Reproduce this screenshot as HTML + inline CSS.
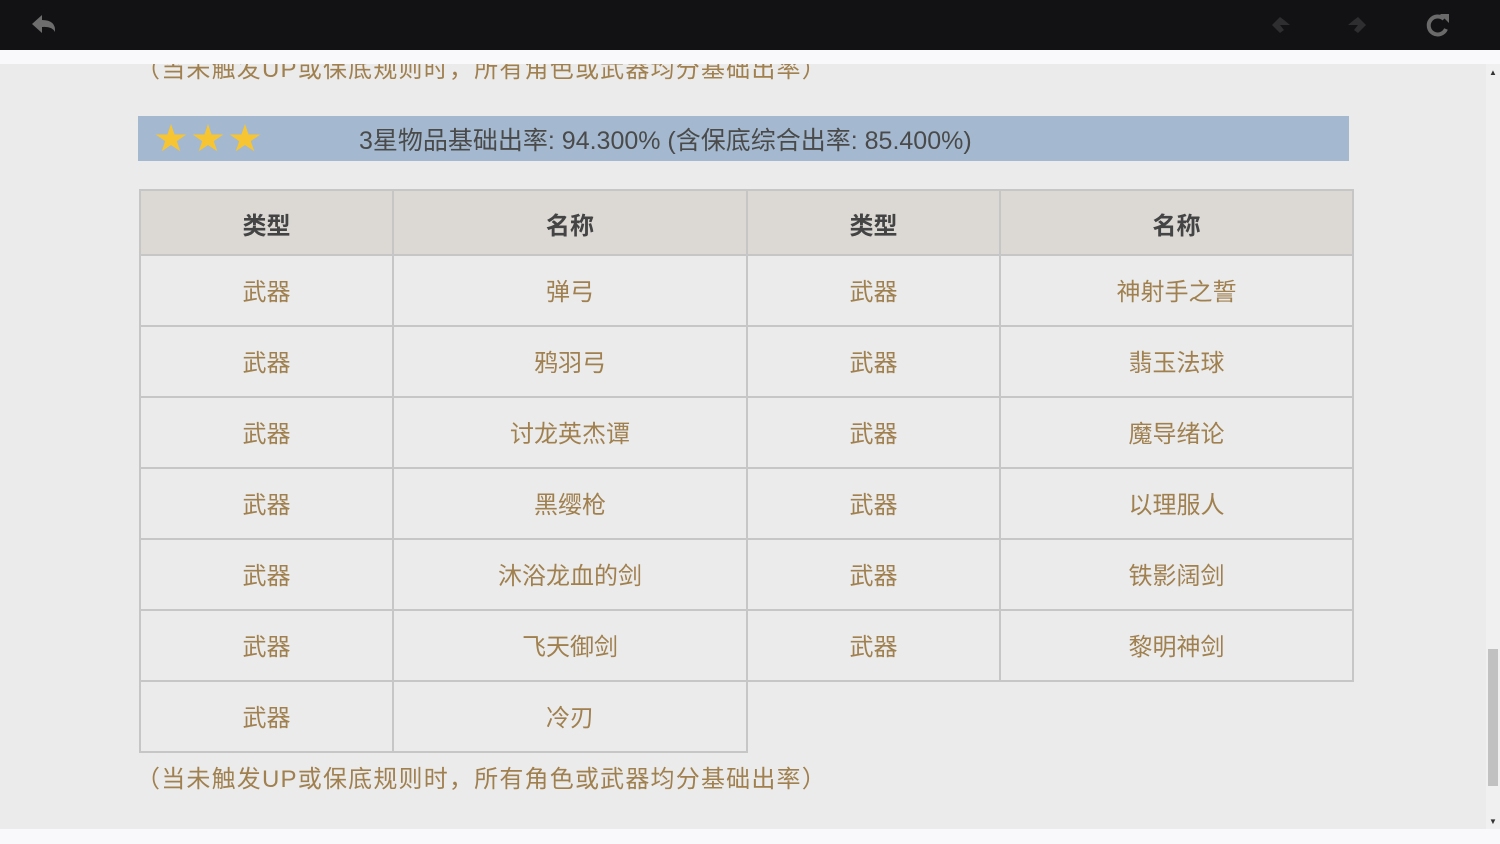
<!DOCTYPE html>
<html><head><meta charset="utf-8"><style>
*{margin:0;padding:0;box-sizing:border-box}
body{width:1500px;height:844px;overflow:hidden;background:#ebebeb;position:relative;font-family:"Liberation Sans","Noto Sans CJK SC",sans-serif}
.top{position:absolute;left:0;top:0;width:1500px;height:50px;background:#121215}
.strip{position:absolute;left:0;top:50px;width:1500px;height:14px;background:#f9f9fb;z-index:2}
.bot{position:absolute;left:0;top:829px;width:1500px;height:15px;background:#f9f9fb;z-index:2}
.note{position:absolute;left:136px;font-size:24px;color:#a0804f;white-space:nowrap;letter-spacing:1.2px}
.bar{position:absolute;left:138px;top:116px;width:1211px;height:45px;background:#a4b9cf}
.bar .t{position:absolute;left:221px;top:5px;font-size:25px;color:#4a4a4a;white-space:nowrap;letter-spacing:0px}
.star{position:absolute;top:8px;width:32px;height:30px;background:#f7c531;clip-path:polygon(50% 0,61% 35%,98% 35%,68% 57%,79% 91%,50% 70%,21% 91%,32% 57%,2% 35%,39% 35%)}
table{position:absolute;left:139px;top:189px;border-collapse:collapse}
td,th{border:2px solid #c6c6c6;text-align:center;font-size:24px;color:#a0804f;font-weight:normal;height:71px;padding-bottom:3px}
th{background:#dcd9d5;color:#444;font-weight:bold;height:65px;padding-bottom:0;padding-top:1px}
.sb{position:absolute;left:1486px;top:64px;width:14px;height:765px;background:#f0f0f0}
.th{position:absolute;left:1488px;top:649px;width:10px;height:137px;background:#c1c1c1}
</style></head><body>
<div class="top">
<svg width="1500" height="50" style="position:absolute;left:0;top:0">
<path d="M32 24 L42 15 L42 20 Q56 20 55 32 Q52 26 42 27 L42 33 Z" fill="#6d6d6d"/>
<path d="M1280 17 L1272 25 L1280 33 L1284 30 L1280 25 L1290 25 L1284 20 Z" fill="#2e2e30"/>
<path d="M1358 17 L1366 25 L1358 33 L1354 30 L1358 25 L1348 25 L1354 20 Z" fill="#2e2e30"/>
<path d="M1444 19 A9 9 0 1 0 1446 29" stroke="#6a6a6a" stroke-width="4" fill="none"/>
<path d="M1440 14 L1449 14 L1449 23 Z" fill="#6a6a6a"/>
</svg>
</div>
<div class="strip"></div>
<div class="note" style="top:49px">（当未触发UP或保底规则时，所有角色或武器均分基础出率）</div>
<div class="bar">
<div class="star" style="left:17px"></div><div class="star" style="left:54px"></div><div class="star" style="left:91px"></div>
<div class="t">3星物品基础出率: 94.300% (含保底综合出率: 85.400%)</div>
</div>
<table>
<tr><th style="width:253px">类型</th><th style="width:354px">名称</th><th style="width:253px">类型</th><th style="width:353px">名称</th></tr>
<tr><td>武器</td><td>弹弓</td><td>武器</td><td>神射手之誓</td></tr>
<tr><td>武器</td><td>鸦羽弓</td><td>武器</td><td>翡玉法球</td></tr>
<tr><td>武器</td><td>讨龙英杰谭</td><td>武器</td><td>魔导绪论</td></tr>
<tr><td>武器</td><td>黑缨枪</td><td>武器</td><td>以理服人</td></tr>
<tr><td>武器</td><td>沐浴龙血的剑</td><td>武器</td><td>铁影阔剑</td></tr>
<tr><td>武器</td><td>飞天御剑</td><td>武器</td><td>黎明神剑</td></tr>
<tr><td>武器</td><td>冷刃</td><td style="border:none"></td><td style="border:none"></td></tr>
</table>
<div class="note" style="top:759px">（当未触发UP或保底规则时，所有角色或武器均分基础出率）</div>
<div class="sb"></div><div class="th"></div>
<div style="position:absolute;left:1489px;top:68px;font-size:8px;color:#333">▲</div>
<div style="position:absolute;left:1489px;top:817px;font-size:8px;color:#333">▼</div>
<div class="bot"></div>
</body></html>
